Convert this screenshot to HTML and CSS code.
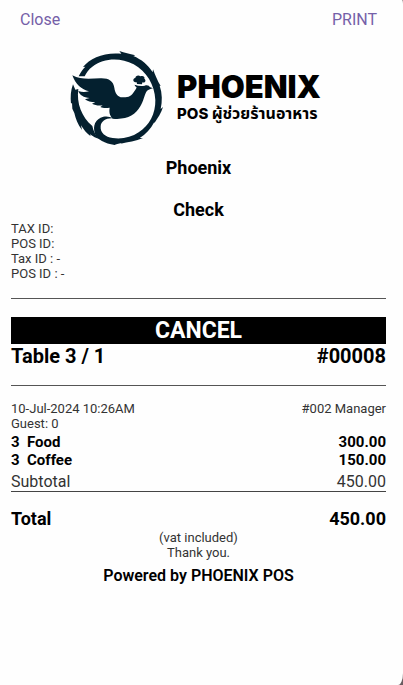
FILE: index.html
```html
<!DOCTYPE html>
<html lang="en">
<head>
    <meta charset="UTF-8">
    <meta name="viewport" content="width=device-width, initial-scale=1.0">
    <title>Phoenix POS - Check</title>
    <link rel="stylesheet" href="styles.css">
</head>
<body>
    <div class="screen">
        <header class="toolbar">
            <button type="button" class="toolbar-button">Close</button>
            <button type="button" class="toolbar-button">PRINT</button>
        </header>

        <main class="receipt">
            <!-- Logo -->
            <div class="logo">
                <svg class="logo-mark" viewBox="30 30 282 288" aria-hidden="true">
                    <g fill="#04202f">
                        <path d="M56 109 C62 97 68 88 76 80 L69 81 C91 54 132 36 184 41 L178 33 C194 38 208 42 226 46 L220 48 C244 58 264 74 278 97 L279 88 C286 106 292 122 302 138 L299 137 C307 160 307 184 302 207 L309 201 C304 219 293 234 283 250 L283 246 C272 267 257 283 239 294 L249 294 C228 304 203 306 182 311 L185 309 C175 311 167 313 164 315 C134 310 112 299 105 281 C97 257 106 236 130 230 C142 228 150 230 158 235 C137 234 123 244 122 259 C120 278 136 292 158 294 C186 298 214 292 236 277 C268 256 287 221 286 180 C284 135 260 94 221 73 C181 52 131 54 97 80 C86 88 79 98 74 109 Z"/>
                        <path d="M39 133 L46 149 L55 147 C49 190 65 231 97 258 C100 274 107 287 120 298 C108 295 99 290 90 283 L92 289 C79 280 71 268 63 256 L66 270 C53 253 47 236 43 219 L37 206 L36 188 L33 191 C31 171 32 152 39 133 Z"/>
                        <path d="M37 106 C62 120 91 116 121 115 C147 114 160 124 163 143 C165 160 173 171 187 172 C205 173 215 167 222 155 C228 147 231 143 229 141 C225 138 224 136 224 134 C234 138 244 139 254 137 C263 134 268 138 269 141 L279 145 C271 147 264 149 259 155 C253 166 251 182 241 199 C226 226 200 240 158 236 C148 225 147 215 149 203 C139 204 132 206 121 201 L128 196 C114 198 105 195 96 191 L106 187 C93 187 82 183 75 178 L89 174 C71 173 59 165 55 153 C65 157 76 157 87 154 C65 149 46 132 37 106 Z"/>
                        <path d="M231 132 L230 127 C219 128 216 116 226 114 C226 106 237 104 241 109 C249 105 256 111 253 116 C260 121 255 130 247 127 L246 133 Z"/>
                    </g>
                </svg>
                <div class="logo-text">
                    <div class="logo-name">PHOENIX</div>
                    <div class="logo-tagline">POS <span class="thai" lang="th">ผู้ช่วยร้านอาหาร</span></div>
                </div>
            </div>

            <h1 class="shop-name">Phoenix</h1>
            <h2 class="doc-type">Check</h2>

            <div class="small">
                <div>TAX ID:</div>
                <div>POS ID:</div>
                <div>Tax ID : -</div>
                <div>POS ID : -</div>
            </div>

            <hr class="line">

            <!-- Order info -->
            <div class="status">CANCEL</div>
            <div class="row order">
                <span>Table 3 / 1</span>
                <span>#00008</span>
            </div>

            <hr class="line">

            <div class="row small">
                <span>10-Jul-2024 10:26AM</span>
                <span>#002 Manager</span>
            </div>
            <div class="small">Guest: 0</div>

            <!-- Items -->
            <table class="items">
                <tbody>
                    <tr>
                        <td class="qty">3</td>
                        <td>Food</td>
                        <td class="price">300.00</td>
                    </tr>
                    <tr>
                        <td class="qty">3</td>
                        <td>Coffee</td>
                        <td class="price">150.00</td>
                    </tr>
                </tbody>
            </table>

            <div class="row subtotal">
                <span>Subtotal</span>
                <span>450.00</span>
            </div>
            <div class="row total">
                <span>Total</span>
                <span>450.00</span>
            </div>

            <footer class="footer">
                <div class="small">(vat included)</div>
                <div class="small">Thank you.</div>
                <div class="powered">Powered by PHOENIX POS</div>
            </footer>
        </main>
    </div>
</body>
</html>
```
FILE: styles.css
```css
* {
    box-sizing: border-box;
}
body {
    margin: 0;
    font-family: Roboto, "Liberation Sans", sans-serif;
    background-color: #6a5c60;
    color: #000;
}
.screen {
    min-height: 100vh;
    background-color: #fefefe;
    border-radius: 0 1px 5px 0 / 0 5px 12px 0;
}
.toolbar {
    display: flex;
    justify-content: space-between;
    padding: 10px 26px 0 20px;
}
.toolbar-button {
    padding: 0;
    border: none;
    background: none;
    font-family: inherit;
    font-size: 16px;
    line-height: 20px;
    color: #7560a8;
    cursor: pointer;
}
.receipt {
    padding: 20px 17px 20px 11px;
}
.logo {
    display: flex;
    justify-content: center;
    align-items: center;
    gap: 13px;
    height: 96px;
    padding-right: 6px;
}
.logo-mark {
    width: 94px;
    height: 96px;
}
.logo-text {
    padding-top: 2px;
    font-family: Inter, "Noto Sans Thai", "Noto Sans", sans-serif;
    white-space: nowrap;
}
.logo-name {
    font-size: 31px;
    font-weight: 900;
    line-height: 28px;
}
.logo-tagline {
    font-size: 15px;
    font-weight: 800;
    line-height: 24px;
}
.thai {
    font-size: 16px;
    font-weight: 700;
}
.shop-name,
.doc-type {
    margin: 0;
    font-size: 18px;
    font-weight: 700;
    line-height: 22px;
    text-align: center;
}
.shop-name {
    margin-top: 11px;
}
.doc-type {
    margin-top: 20px;
}
.small {
    font-size: 13px;
    line-height: 15px;
    color: #333;
}
.line {
    height: 1px;
    margin: 17px 0 18px;
    border: none;
    background-color: #555;
}
.status {
    background-color: #000;
    color: #fff;
    font-size: 23px;
    font-weight: 700;
    line-height: 27px;
    text-align: center;
}
.row {
    display: flex;
    justify-content: space-between;
}
.order {
    font-size: 20px;
    font-weight: 700;
    line-height: 24px;
}
.order + .line {
    margin-bottom: 15px;
}
.items {
    width: 100%;
    margin-top: 2px;
    border-collapse: collapse;
    font-size: 15px;
    font-weight: 700;
    line-height: 18px;
}
.items td {
    padding: 0;
}
.items .qty {
    width: 16px;
}
.items .price {
    text-align: right;
}
.subtotal {
    margin-top: 4px;
    border-bottom: 1px solid #444;
    font-size: 16px;
    line-height: 18px;
    color: #333;
}
.total {
    margin-top: 16px;
    font-size: 18px;
    font-weight: 700;
    line-height: 22px;
}
.footer {
    text-align: center;
}
.powered {
    margin-top: 6px;
    font-size: 16px;
    font-weight: 600;
    line-height: 20px;
}
```
